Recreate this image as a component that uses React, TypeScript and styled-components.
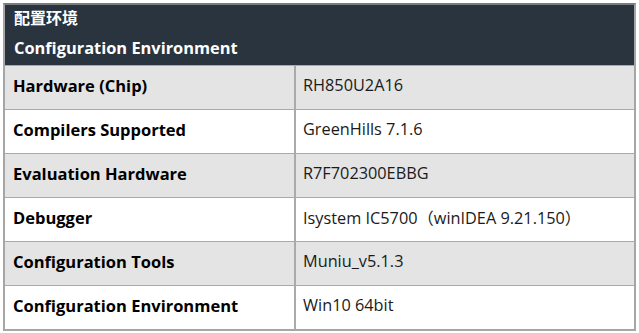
import React from 'react';
import styled, { createGlobalStyle } from 'styled-components';

const GlobalStyle = createGlobalStyle`
  html, body {
    margin: 0;
    padding: 0;
    background: #ffffff;
  }
  body {
    padding: 3px 0 0 3px;
    font-family: "Open Sans", "Noto Sans CJK SC", sans-serif;
  }
`;

type Row = { label: string; value: string };

const rows: Row[] = [
  { label: 'Hardware (Chip)', value: 'RH850U2A16' },
  { label: 'Compilers Supported', value: 'GreenHills 7.1.6' },
  { label: 'Evaluation Hardware', value: 'R7F702300EBBG' },
  { label: 'Debugger', value: 'Isystem IC5700（winIDEA 9.21.150）' },
  { label: 'Configuration Tools', value: 'Muniu_v5.1.3' },
  { label: 'Configuration Environment', value: 'Win10 64bit' },
];

const Table = styled.div`
  width: 629px;
  border: 2px solid #a6a6a6;
  border-top-color: #7c7c7c;
`;

const Header = styled.div`
  background: #29343e;
  color: #ffffff;
  padding: 0 9px 5px;
  font-weight: 700;
  font-size: 16.4px;
`;

const Title = styled.div`
  line-height: 24px;
  font-size: 16px;
  font-family: "Noto Sans CJK SC", sans-serif;
`;

const Subtitle = styled.div`
  line-height: 24px;
  margin-top: 7px;
`;

const RowBox = styled.div<{ $shaded: boolean }>`
  display: grid;
  grid-template-columns: 291px 1fr;
  height: 43px;
  border-top: 1px solid #aaaaaa;
  background: ${p => (p.$shaded ? '#e4e4e4' : '#ffffff')};
`;

const LabelCell = styled.div`
  display: flex;
  align-items: center;
  padding: 0 0 5px 8px;
  border-right: 2px solid #aaaaaa;
  font-size: 16.5px;
  font-weight: 700;
  color: #000000;
`;

const ValueCell = styled.div`
  display: flex;
  align-items: center;
  padding: 0 0 5px 7px;
  font-family: "Open Sans", "Noto Sans CJK SC", sans-serif;
  font-size: 16.3px;
  color: #1a1a1a;
`;

export default function App() {
  return (
    <>
      <GlobalStyle />
      <Table>
        <Header>
          <Title>配置环境</Title>
          <Subtitle>Configuration Environment</Subtitle>
        </Header>
        {rows.map((r, i) => (
          <RowBox key={r.label} $shaded={i % 2 === 0}>
            <LabelCell>{r.label}</LabelCell>
            <ValueCell>{r.value}</ValueCell>
          </RowBox>
        ))}
      </Table>
    </>
  );
}
